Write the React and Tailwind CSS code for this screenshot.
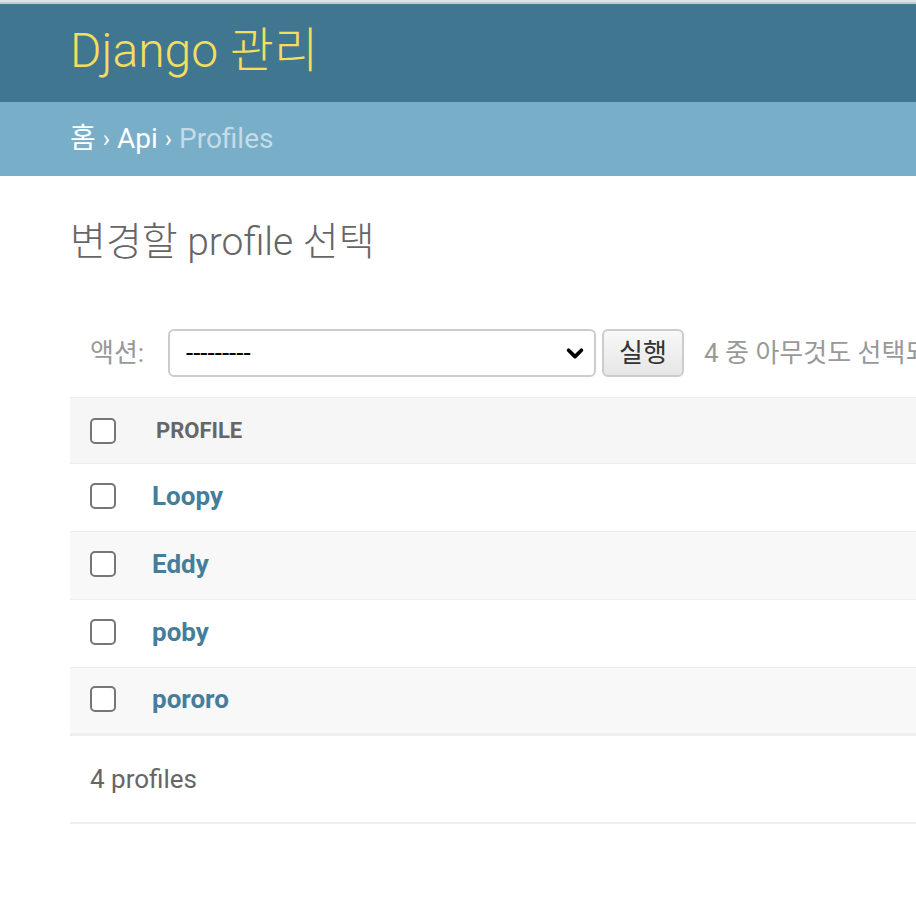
const font = "font-['Roboto','Noto_Sans_CJK_KR',sans-serif]";

function Checkbox() {
  return <div className="w-[26px] h-[26px] shrink-0 rounded-[5px] border-2 border-[#767676] bg-white" />;
}

const profiles = ["Loopy", "Eddy", "poby", "pororo"];

export default function App() {
  return (
    <div className={`${font} w-[916px] h-[902px] overflow-hidden bg-white`}>
      <div className="h-[4px] border-t-2 border-[#dfe2e6] bg-[#c5cad0]" />
      <div className="h-[98px] bg-[#417690] flex items-center pl-[70px]">
        <h1 className="text-[48px] leading-none text-[#f5dd5d] font-light pb-[4px]">Django 관리</h1>
      </div>
      <div className="h-[74px] bg-[#79aec8] flex items-center pl-[70px] text-[28px] text-[#c4dce8]">
        <span className="text-white">홈</span>
        <span className="mx-[7px] text-white text-[24px]">›</span>
        <span className="text-white">Api</span>
        <span className="mx-[7px] text-white text-[24px]">›</span>
        <span>Profiles</span>
      </div>
      <div className="pl-[70px]">
        <h1 className="mt-[42px] text-[39px] leading-[48px] font-light text-[#666]">변경할 profile 선택</h1>
        <div className="mt-[63px] flex items-center h-[48px] whitespace-nowrap">
          <span className="shrink-0 ml-[20px] text-[26px] text-[#999] w-[78px]">액션:</span>
          <div className="shrink-0 w-[428px] h-[48px] rounded-[6px] border-2 border-[#ccc] flex items-center justify-between pl-[16px] pr-[8px]">
            <span className="text-[26px] text-black leading-none">---------</span>
            <svg width="22" height="22" viewBox="0 0 24 24" fill="none" stroke="black" strokeWidth="4" strokeLinecap="round" strokeLinejoin="round">
              <path d="M5 9l7 7 7-7" />
            </svg>
          </div>
          <button className="shrink-0 ml-[6px] w-[82px] h-[48px] rounded-[6px] border-2 border-[#ccc] bg-gradient-to-b from-[#f8f8f8] to-[#e6e6e6] text-[26px] text-[#333]">실행</button>
          <span className="shrink-0 ml-[20px] text-[26px] text-[#999]">4 중 아무것도 선택되지 않았습니다</span>
        </div>
        <div className="mt-[20px]">
          <div className="h-[67px] bg-[#f6f6f6] border-y border-[#eee] flex items-center">
            <div className="ml-[20px]"><Checkbox /></div>
            <span className="ml-[40px] text-[22px] font-bold text-[#666]">PROFILE</span>
          </div>
          {profiles.map((p, i) => (
            <div key={p} className={`h-[68px] flex items-center border-b border-[#eee] ${i % 2 === 1 ? "bg-[#f8f8f8]" : "bg-white"} ${i === profiles.length - 1 ? "border-b-[3px] border-[#ddd]" : ""}`}>
              <div className="ml-[20px] mb-[4px]"><Checkbox /></div>
              <span className="ml-[36px] mb-[2px] text-[26px] font-bold text-[#447e9b]">{p}</span>
            </div>
          ))}
          <div className="h-[88px] border-b-2 border-[#eee] flex items-center pl-[20px] text-[26px] text-[#666]">4 profiles</div>
        </div>
      </div>
    </div>
  );
}
